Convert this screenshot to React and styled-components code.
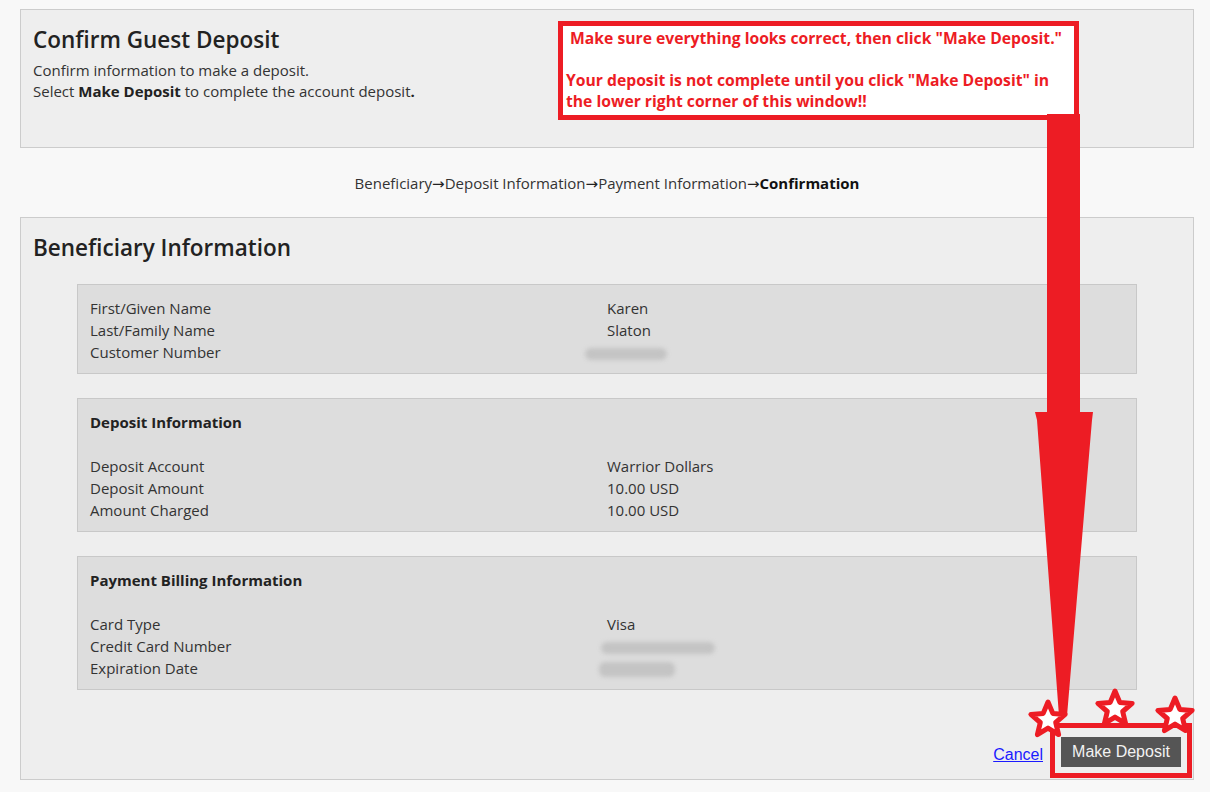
import styled, { createGlobalStyle } from "styled-components";

const Global = createGlobalStyle`
  body {
    margin: 0;
    background: #f8f8f8;
    font-family: "Open Sans", "Noto Sans", sans-serif;
    color: #333;
  }
`;

const Page = styled.div`
  position: relative;
  width: 1210px;
  height: 792px;
  box-sizing: border-box;
  padding: 9px 16px 0 20px;
`;

const Panel = styled.section`
  box-sizing: border-box;
  background: #eeeeee;
  border: 1px solid #cccccc;
  height: ${(p) => p.h}px;
  padding: 14px 12px 12px 12px;
  display: flex;
  flex-direction: column;
`;

const Title = styled.h1`
  margin: 0;
  font-size: 22.5px;
  font-weight: 600;
  color: #222;
  line-height: 32px;
`;

const Lead = styled.p`
  margin: 4px 0 0;
  font-size: 15px;
  line-height: 21px;
  color: #333;
  b {
    font-weight: 700;
    color: #222;
  }
`;

const Steps = styled.nav`
  height: 69px;
  display: flex;
  align-items: center;
  justify-content: center;
  font-size: 15px;
  color: #333;
  b {
    color: #111;
    font-weight: 700;
  }
`;

const Arrow = styled.span`
  font-family: "DejaVu Sans", sans-serif;
  font-size: 15px;
  color: #222;
  position: relative;
  top: 1px;
`;

const Boxes = styled.div`
  margin: 20px 44px 0 44px;
  display: flex;
  flex-direction: column;
  gap: 24px;
`;

const Box = styled.div`
  box-sizing: border-box;
  background: #dddddd;
  border: 1px solid #c8c8c8;
  padding: 12px 12px 10px;
  font-size: 15px;
  line-height: 22px;
`;

const BoxHead = styled.div`
  font-weight: 700;
  color: #222;
  margin-bottom: 22px;
`;

const Row = styled.div`
  display: grid;
  grid-template-columns: 1fr 1fr;
`;

const Blur = styled.span`
  display: inline-block;
  width: ${(p) => p.w}px;
  height: ${(p) => p.hgt || 12}px;
  margin-left: ${(p) => p.off || 0}px;
  background: #c4c4c4;
  border-radius: 6px;
  filter: blur(2px);
  vertical-align: middle;
`;

const Footer = styled.div`
  margin-top: auto;
  display: flex;
  justify-content: flex-end;
  align-items: flex-end;
  gap: 18px;
`;

const CancelLink = styled.a`
  font-family: "Liberation Sans", Arial, sans-serif;
  font-size: 16px;
  color: #1a1aff;
  text-decoration: underline;
  margin-bottom: 3px;
  cursor: pointer;
`;

const Button = styled.button`
  font-family: "Liberation Sans", Arial, sans-serif;
  font-size: 16px;
  color: #f2f2f2;
  background: #555555;
  border: 0;
  width: 120px;
  height: 30px;
  padding: 0;
`;

const Callout = styled.div`
  position: absolute;
  left: 558px;
  top: 21px;
  width: 521px;
  height: 99px;
  box-sizing: border-box;
  border: 5px solid #ed1c24;
  background: #fff;
  padding: 2px 8px 0 3px;
  font-family: "Open Sans", "Noto Sans", sans-serif;
  font-weight: 700;
  font-size: 15.7px;
  line-height: 21px;
  color: #ed1c24;
  p {
    margin: 0;
    white-space: nowrap;
  }
`;

const Overlay = styled.svg`
  position: absolute;
  left: 0;
  top: 0;
  pointer-events: none;
`;

const star = (cx, cy, r) => {
  const pts = [];
  for (let i = 0; i < 10; i++) {
    const rad = i % 2 === 0 ? r : r * 0.45;
    const a = -Math.PI / 2 + (i * Math.PI) / 5;
    pts.push(`${(cx + rad * Math.cos(a)).toFixed(1)},${(cy + rad * Math.sin(a)).toFixed(1)}`);
  }
  return pts.join(" ");
};

export default function App() {
  return (
    <>
      <Global />
      <Page>
        <Panel h={139}>
          <Title>Confirm Guest Deposit</Title>
          <Lead>
            Confirm information to make a deposit.
            <br />
            Select <b>Make Deposit</b> to complete the account deposit<b>.</b>
          </Lead>
        </Panel>

        <Steps>
          Beneficiary<Arrow>→</Arrow>Deposit Information<Arrow>→</Arrow>Payment Information
          <Arrow>→</Arrow>
          <b>Confirmation</b>
        </Steps>

        <Panel h={563}>
          <Title>Beneficiary Information</Title>
          <Boxes>
            <Box>
              <Row><span>First/Given Name</span><span>Karen</span></Row>
              <Row><span>Last/Family Name</span><span>Slaton</span></Row>
              <Row><span>Customer Number</span><span><Blur w={82} off={-22} /></span></Row>
            </Box>
            <Box>
              <BoxHead>Deposit Information</BoxHead>
              <Row><span>Deposit Account</span><span>Warrior Dollars</span></Row>
              <Row><span>Deposit Amount</span><span>10.00 USD</span></Row>
              <Row><span>Amount Charged</span><span>10.00 USD</span></Row>
            </Box>
            <Box>
              <BoxHead>Payment Billing Information</BoxHead>
              <Row><span>Card Type</span><span>Visa</span></Row>
              <Row><span>Credit Card Number</span><span><Blur w={114} off={-6} /></span></Row>
              <Row><span>Expiration Date</span><span><Blur w={76} hgt={15} off={-8} /></span></Row>
            </Box>
          </Boxes>
          <Footer>
            <CancelLink>Cancel</CancelLink>
            <Button>Make Deposit</Button>
          </Footer>
        </Panel>

        <Callout>
          <p>&nbsp;Make sure everything looks correct, then click "Make Deposit."</p>
          <p>&nbsp;</p>
          <p>Your deposit is not complete until you click "Make Deposit" in</p>
          <p>the lower right corner of this window!!</p>
        </Callout>

        <Overlay width="1210" height="792" viewBox="0 0 1210 792">
          <rect x="1052.5" y="725.5" width="137" height="50" fill="none" stroke="#ed1c24" strokeWidth="5" />
          <rect x="1047" y="114" width="33" height="300" fill="#ed1c24" />
          <polygon points="1035,412 1093,412 1092,420 1067,716 1059,716 1037,420" fill="#ed1c24" />
          <polygon points={star(1048, 720, 18)} fill="#fff" stroke="#ed1c24" strokeWidth="5" strokeLinejoin="round" />
          <polygon points={star(1115, 709, 18)} fill="#fff" stroke="#ed1c24" strokeWidth="5" strokeLinejoin="round" />
          <polygon points={star(1175, 716, 18)} fill="#fff" stroke="#ed1c24" strokeWidth="5" strokeLinejoin="round" />
        </Overlay>
      </Page>
    </>
  );
}
